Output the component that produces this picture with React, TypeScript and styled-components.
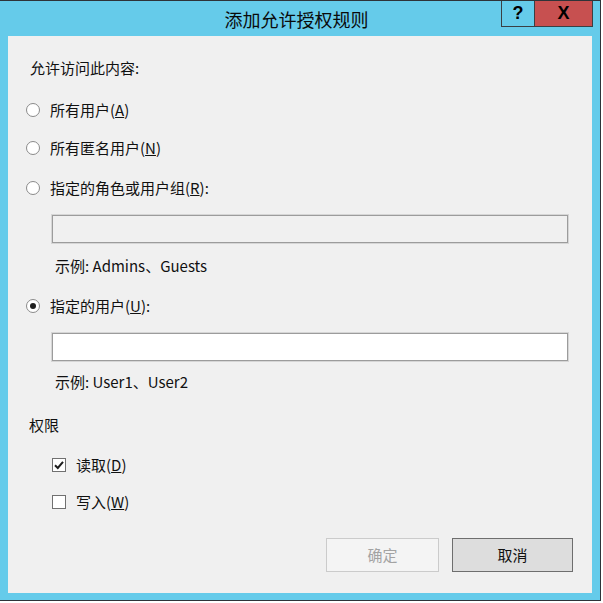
import styled, { createGlobalStyle } from "styled-components";

const GlobalStyle = createGlobalStyle`
  body {
    margin: 0;
    background: #ffffff;
    font-family: "Noto Sans CJK SC", "Noto Sans", sans-serif;
  }
`;

const Window = styled.div`
  width: 601px;
  height: 601px;
  box-sizing: border-box;
  background: #65cbea;
  border: 1px solid #2e3338;
  border-left: none;
  display: flex;
  flex-direction: column;
`;

const TitleBar = styled.div`
  height: 35px;
  flex-shrink: 0;
  display: grid;
  grid-template-columns: 1fr auto 1fr;
  padding-right: 7px;
`;

const Title = styled.div`
  grid-column: 2;
  align-self: center;
  font-size: 18px;
  line-height: 22px;
  color: #0a0a0a;
  margin-top: 1px;
`;

const Controls = styled.div`
  grid-column: 3;
  justify-self: end;
  display: flex;
  height: 26px;
`;

const CaptionButton = styled.div<{ $close?: boolean }>`
  box-sizing: border-box;
  width: ${(p) => (p.$close ? "58px" : "34px")};
  height: 26px;
  border: 1px solid #3a3f44;
  border-top: none;
  border-left: ${(p) => (p.$close ? "none" : "1px solid #3a3f44")};
  background: ${(p) => (p.$close ? "#c75050" : "#65cbea")};
  display: flex;
  align-items: center;
  justify-content: center;
  font-family: "Liberation Sans", Arial, sans-serif;
  font-weight: bold;
  font-size: 18px;
  color: #000;
`;

const Client = styled.div`
  flex: 1;
  margin: 0 8px 7px 8px;
  background: #f0f0f0;
  display: flex;
  flex-direction: column;
  padding: 22px 0 21px 0;
  font-size: 15px;
  line-height: 20px;
  color: #111;
`;

const Label = styled.div<{ $top?: number; $left: number }>`
  margin-top: ${(p) => p.$top ?? 0}px;
  margin-left: ${(p) => p.$left}px;
  height: 20px;
`;

const OptionRow = styled.label<{ $top: number; $left: number }>`
  display: flex;
  align-items: center;
  gap: 10px;
  height: 20px;
  margin-top: ${(p) => p.$top}px;
  padding-left: ${(p) => p.$left}px;
`;

const Radio = styled.span<{ $checked?: boolean }>`
  box-sizing: border-box;
  width: 14px;
  height: 14px;
  border-radius: 50%;
  border: 1px solid #8a8a8a;
  background: #ffffff;
  display: flex;
  align-items: center;
  justify-content: center;

  &::after {
    content: "";
    display: ${(p) => (p.$checked ? "block" : "none")};
    width: 6px;
    height: 6px;
    border-radius: 50%;
    background: #1e1e1e;
  }
`;

const Box = styled.span`
  box-sizing: border-box;
  width: 14px;
  height: 14px;
  border: 1px solid #707070;
  background: #ffffff;
  display: flex;
  align-items: center;
  justify-content: center;
`;

const TextBox = styled.div<{ $disabled?: boolean; $top: number }>`
  box-sizing: border-box;
  height: 28px;
  margin: ${(p) => p.$top}px 24px 0 44px;
  border: 1px solid #9c9c9c;
  box-shadow: 0 0 0 1px #d6d6d6;
  background: ${(p) => (p.$disabled ? "#f0f0f0" : "#ffffff")};
`;

const Buttons = styled.div`
  margin-top: auto;
  display: flex;
  justify-content: flex-end;
  gap: 13px;
  padding-right: 19px;
`;

const Button = styled.div<{ $disabled?: boolean; $width: number }>`
  box-sizing: border-box;
  width: ${(p) => p.$width}px;
  height: 34px;
  display: flex;
  align-items: center;
  justify-content: center;
  border: 1px solid ${(p) => (p.$disabled ? "#cbcbcb" : "#6e6e6e")};
  background: ${(p) => (p.$disabled ? "#f4f4f4" : "#dddddd")};
  color: ${(p) => (p.$disabled ? "#a3a3a3" : "#111")};
  font-size: 15px;
`;

function Check() {
  return (
    <svg width="12" height="12" viewBox="0 0 12 12">
      <path d="M2 6.2 L4.8 9 L10 2.8" fill="none" stroke="#1e1e1e" strokeWidth="2" />
    </svg>
  );
}

export default function App() {
  return (
    <>
      <GlobalStyle />
      <Window>
        <TitleBar>
          <Title>添加允许授权规则</Title>
          <Controls>
            <CaptionButton>?</CaptionButton>
            <CaptionButton $close>X</CaptionButton>
          </Controls>
        </TitleBar>
        <Client>
          <Label $left={22}>允许访问此内容:</Label>
          <OptionRow $top={22} $left={18}>
            <Radio />
            <span>所有用户(<u>A</u>)</span>
          </OptionRow>
          <OptionRow $top={18} $left={18}>
            <Radio />
            <span>所有匿名用户(<u>N</u>)</span>
          </OptionRow>
          <OptionRow $top={20} $left={18}>
            <Radio />
            <span>指定的角色或用户组(<u>R</u>):</span>
          </OptionRow>
          <TextBox $disabled $top={17} />
          <Label $top={13} $left={47}>示例: Admins、Guests</Label>
          <OptionRow $top={20} $left={18}>
            <Radio $checked />
            <span>指定的用户(<u>U</u>):</span>
          </OptionRow>
          <TextBox $top={17} />
          <Label $top={11} $left={47}>示例: User1、User2</Label>
          <Label $top={23} $left={21}>权限</Label>
          <OptionRow $top={20} $left={44}>
            <Box>
              <Check />
            </Box>
            <span>读取(<u>D</u>)</span>
          </OptionRow>
          <OptionRow $top={17} $left={44}>
            <Box />
            <span>写入(<u>W</u>)</span>
          </OptionRow>
          <Buttons>
            <Button $disabled $width={113}>确定</Button>
            <Button $width={121}>取消</Button>
          </Buttons>
        </Client>
      </Window>
    </>
  );
}
